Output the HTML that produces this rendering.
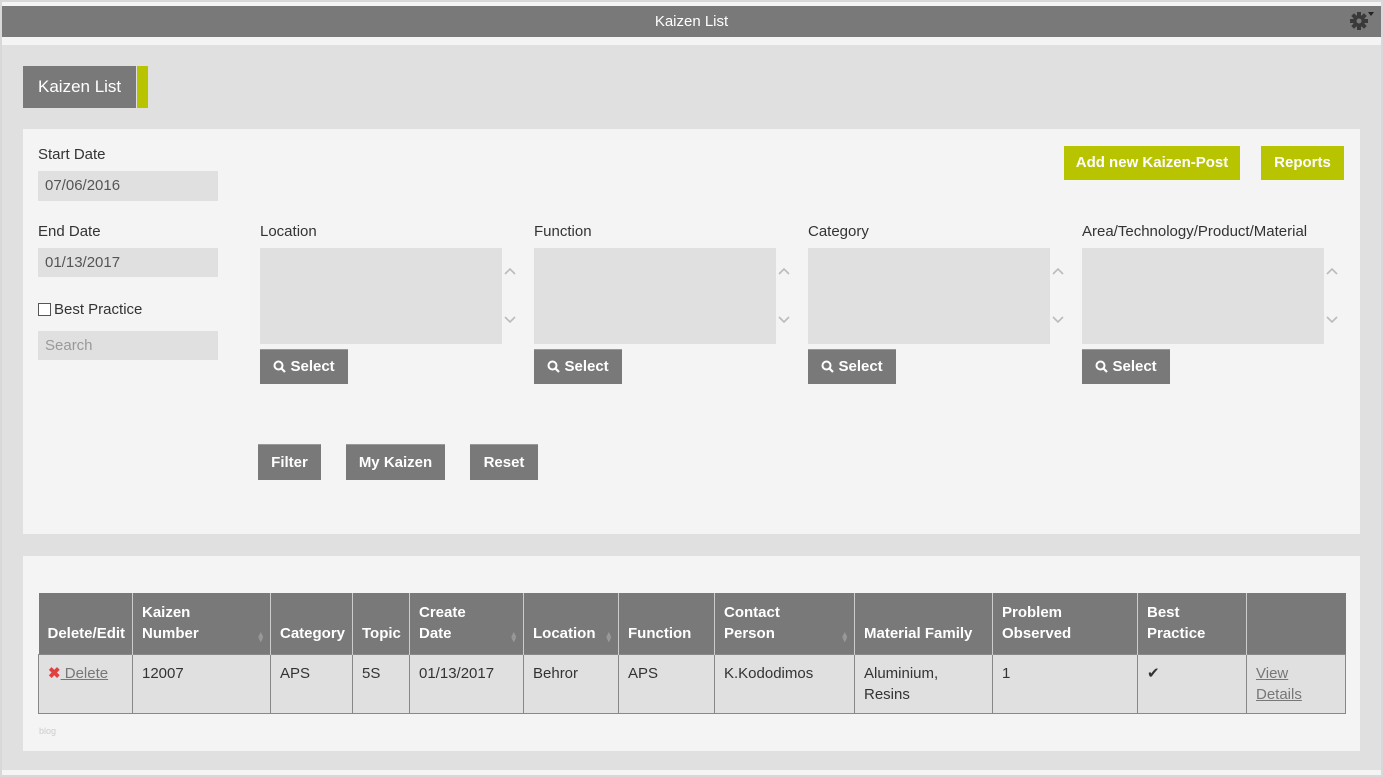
<!DOCTYPE html>
<html><head><meta charset="utf-8"><style>
*{box-sizing:border-box;margin:0;padding:0}
body{width:1383px;height:777px;background:#fff;font-family:"Liberation Sans",Arial,sans-serif;font-size:15px;color:#333;position:relative;overflow:hidden}
.a{position:absolute}
.frame{left:0;top:0;width:1383px;height:777px;border:2px solid #d8d8d8;background:#f4f4f4}
.top{left:2px;top:6px;width:1379px;height:31px;background:#797979;color:#fff;text-align:center;line-height:31px;font-size:15px}
.bg{left:2px;top:45px;width:1379px;height:725px;background:#e0e0e0}
.panel{background:#f4f4f4}
.inp{background:#e0e0e0;color:#555;padding-left:7px;line-height:30px;font-size:15px}
.btn{background:#797979;color:#fff;font-weight:bold;font-size:15px;text-align:center;border-top:1px solid #999}
.lime{background:#b9c400;color:#fff;font-weight:bold;font-size:15px;text-align:center;line-height:34px}
.box{background:#e0e0e0;width:242px;height:96px}
table{border-collapse:collapse;font-size:15px}
th{background:#797979;color:#fff;text-align:left;font-weight:bold;vertical-align:bottom;padding:0 9px 10px;border-left:1px solid #ccc;line-height:21px;position:relative}
td{background:#e0e0e0;border:1px solid #888;vertical-align:top;padding:8px 9px 7px;line-height:21px;color:#333}
.s{position:absolute;right:7px;bottom:12px;font-size:9px;color:#999;line-height:5px}
a{color:#777}
</style></head><body>
<div class="a frame"></div>
<div class="a top">Kaizen List</div>
<svg class="a" style="left:1349px;top:11px" width="30" height="20" viewBox="0 0 30 20"><g fill="#3a3a3a"><circle cx="10" cy="10" r="6"/><rect x="8" y="1" width="4" height="18"/><rect x="1" y="8" width="18" height="4"/><rect x="8" y="1" width="4" height="18" transform="rotate(45 10 10)"/><rect x="8" y="1" width="4" height="18" transform="rotate(-45 10 10)"/></g><circle cx="10" cy="10" r="2.5" fill="#797979"/><path d="M19 1h6l-3 4z" fill="#222"/></svg>
<div class="a bg"></div>
<div class="a" style="left:23px;top:66px;width:113px;height:42px;background:#797979;color:#fff;font-size:17px;line-height:42px;padding-left:15px">Kaizen List</div>
<div class="a" style="left:137px;top:66px;width:11px;height:42px;background:#b9c400"></div>
<div class="a panel" style="left:23px;top:129px;width:1337px;height:405px"></div>
<div class="a" style="left:38px;top:146px">Start Date</div>
<div class="a inp" style="left:38px;top:171px;width:180px;height:30px">07/06/2016</div>
<div class="a" style="left:38px;top:223px">End Date</div>
<div class="a inp" style="left:38px;top:248px;width:180px;height:29px">01/13/2017</div>
<div class="a" style="left:38px;top:301px"><span style="display:inline-block;width:13px;height:13px;border:1px solid #555;background:#fff;vertical-align:-2px;margin-right:3px"></span>Best Practice</div>
<div class="a inp" style="left:38px;top:331px;width:180px;height:29px;color:#999">Search</div>
<div class="a lime" style="left:1064px;top:146px;width:176px">Add new Kaizen-Post</div>
<div class="a lime" style="left:1261px;top:146px;width:83px">Reports</div>

<div class="a" style="left:260px;top:223px">Location</div>
<div class="a box" style="left:260px;top:248px"></div>
<div class="a" style="left:534px;top:223px">Function</div>
<div class="a box" style="left:534px;top:248px"></div>
<div class="a" style="left:808px;top:223px">Category</div>
<div class="a box" style="left:808px;top:248px"></div>
<div class="a" style="left:1082px;top:223px">Area/Technology/Product/Material</div>
<div class="a box" style="left:1082px;top:248px"></div>

<svg class="a" style="left:0;top:0" width="1383" height="400"><g fill="none" stroke="#bbb" stroke-width="1.6"><path d="M505 274l5-5 5 5M505 317l5 5 5-5M779 274l5-5 5 5M779 317l5 5 5-5M1053 274l5-5 5 5M1053 317l5 5 5-5M1327 274l5-5 5 5M1327 317l5 5 5-5"/></g></svg>

<div class="a btn" style="left:260px;top:349px;width:88px;height:35px;line-height:34px"><svg width="13" height="13" viewBox="0 0 13 13" style="vertical-align:-2px"><circle cx="5.5" cy="5.5" r="4" stroke="#fff" stroke-width="2" fill="none"/><path d="M8.5 8.5l3.5 3.5" stroke="#fff" stroke-width="2.2"/></svg> Select</div>
<div class="a btn" style="left:534px;top:349px;width:88px;height:35px;line-height:34px"><svg width="13" height="13" viewBox="0 0 13 13" style="vertical-align:-2px"><circle cx="5.5" cy="5.5" r="4" stroke="#fff" stroke-width="2" fill="none"/><path d="M8.5 8.5l3.5 3.5" stroke="#fff" stroke-width="2.2"/></svg> Select</div>
<div class="a btn" style="left:808px;top:349px;width:88px;height:35px;line-height:34px"><svg width="13" height="13" viewBox="0 0 13 13" style="vertical-align:-2px"><circle cx="5.5" cy="5.5" r="4" stroke="#fff" stroke-width="2" fill="none"/><path d="M8.5 8.5l3.5 3.5" stroke="#fff" stroke-width="2.2"/></svg> Select</div>
<div class="a btn" style="left:1082px;top:349px;width:88px;height:35px;line-height:34px"><svg width="13" height="13" viewBox="0 0 13 13" style="vertical-align:-2px"><circle cx="5.5" cy="5.5" r="4" stroke="#fff" stroke-width="2" fill="none"/><path d="M8.5 8.5l3.5 3.5" stroke="#fff" stroke-width="2.2"/></svg> Select</div>

<div class="a btn" style="left:258px;top:444px;width:63px;height:36px;line-height:36px">Filter</div>
<div class="a btn" style="left:346px;top:444px;width:99px;height:36px;line-height:36px">My Kaizen</div>
<div class="a btn" style="left:470px;top:444px;width:68px;height:36px;line-height:36px">Reset</div>

<div class="a panel" style="left:23px;top:556px;width:1337px;height:195px"></div>
<table class="a" style="left:38px;top:593px;width:1307px;table-layout:fixed">
<tr style="height:61px">
<th style="width:94px;border-left:0;padding-left:9px;padding-right:0">Delete/Edit</th>
<th style="width:138px">Kaizen<br>Number<span class="s">▴<br>▾</span></th>
<th style="width:82px">Category</th>
<th style="width:57px">Topic</th>
<th style="width:114px">Create<br>Date<span class="s">▴<br>▾</span></th>
<th style="width:95px">Location<span class="s">▴<br>▾</span></th>
<th style="width:96px">Function</th>
<th style="width:140px">Contact<br>Person<span class="s">▴<br>▾</span></th>
<th style="width:138px">Material Family</th>
<th style="width:145px">Problem<br>Observed</th>
<th style="width:109px">Best<br>Practice</th>
<th style="width:99px"></th>
</tr>
<tr style="height:59px">
<td><span style="color:#e04040;font-weight:bold">✖</span><a href="#"> Delete</a></td>
<td>12007</td><td>APS</td><td>5S</td><td>01/13/2017</td><td>Behror</td><td>APS</td><td>K.Kododimos</td><td>Aluminium,<br>Resins</td><td>1</td><td>✔</td><td><a href="#">View<br>Details</a></td>
</tr>
</table>
<div class="a" style="left:39px;top:726px;font-size:9px;color:#ccc">blog</div>
</body></html>
